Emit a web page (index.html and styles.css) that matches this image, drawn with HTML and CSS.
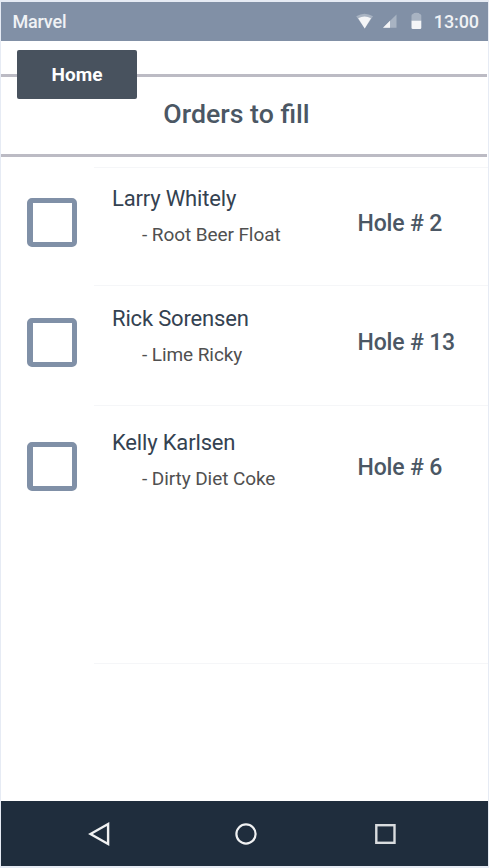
FILE: index.html
```html
<!DOCTYPE html>
<html lang="en">
<head>
<meta charset="utf-8">
<title>Orders to fill</title>
<link rel="stylesheet" href="styles.css">
</head>
<body>
<div class="screen">
  <div class="status">
    <span class="carrier">Marvel</span>
    <svg class="signals" width="67" height="20" viewBox="0 0 67 20" aria-hidden="true">
      <path d="M.2 4.2Q8.5-.8 17 4.2L8.7 16.5z" fill="#a8b3c2"/>
      <path d="M2.2 6.2Q8.6 2.8 15 6.2L8.7 16.5z" fill="#f4f5f7"/>
      <path d="M27 15.8L40.5 2.5V15.8z" fill="#a8b3c2"/>
      <path d="M27 15.8L34 8.8V15.8z" fill="#f4f5f7"/>
      <path d="M55.5 9V3.5Q55.5 2 57 2Q57.5.8 60.4.8T63.8 2Q65.3 2 65.3 3.5V9z" fill="#a8b3c2"/>
      <path d="M55.5 8.8H65.3V15.8Q65.3 17 64 17H56.8Q55.5 17 55.5 15.8z" fill="#f4f5f7"/>
    </svg>
    <span class="clock">13:00</span>
  </div>
  <header class="header">
    <a class="home">Home</a>
    <h1 class="title">Orders to fill</h1>
  </header>
  <main class="orders">
    <section class="order">
      <span class="check"></span>
      <div class="detail"><div class="name">Larry Whitely</div><div class="item">- Root Beer Float</div></div>
      <div class="hole">Hole # 2</div>
    </section>
    <section class="order second">
      <span class="check"></span>
      <div class="detail"><div class="name">Rick Sorensen</div><div class="item">- Lime Ricky</div></div>
      <div class="hole">Hole # 13</div>
    </section>
    <section class="order third">
      <span class="check"></span>
      <div class="detail"><div class="name">Kelly Karlsen</div><div class="item">- Dirty Diet Coke</div></div>
      <div class="hole">Hole # 6</div>
    </section>
    <div class="end"></div>
  </main>
  <nav class="nav">
    <svg width="24" height="26" viewBox="0 0 24 26"><path d="M3.5 13L21.1 3V23z" fill="none" stroke="#f0f1f2" stroke-width="2.4"/></svg>
    <svg width="24" height="26" viewBox="0 0 24 26"><circle cx="12" cy="13" r="9.6" fill="none" stroke="#f0f1f2" stroke-width="2.2"/></svg>
    <svg width="24" height="26" viewBox="0 0 24 26"><rect x="2.3" y="4.2" width="18.2" height="17.6" fill="none" stroke="#d9dcdf" stroke-width="2.4"/></svg>
  </nav>
</div>
</body>
</html>
```

FILE: styles.css
```css
* { box-sizing: border-box; }
body {
  margin: 0;
  height: 868px;
  padding: 2px 1px;
  background: #e6ebf4;
  font-family: Roboto, sans-serif;
  overflow: hidden;
}
.screen {
  display: flex;
  flex-direction: column;
  height: 864px;
  background: #fff;
}
.status {
  display: flex;
  align-items: center;
  height: 39px;
  padding: 0 9px 0 11.5px;
  background: #8190a6;
  color: #f0f2f5;
  font-size: 18px;
  font-weight: 500;
}
.carrier { flex: 1; letter-spacing: -0.2px; }
.signals { margin-right: 11px; }
.clock { font-size: 18px; letter-spacing: -0.1px; }
.header {
  position: relative;
  height: 83px;
  margin: 33px 1px 0 0;
  border-top: 3px solid #bcbbc4;
  border-bottom: 3px solid #bcbbc4;
}
.home {
  position: absolute;
  left: 16px;
  top: -27px;
  width: 120px;
  height: 49px;
  border-radius: 2px;
  background: #48525e;
  color: #fff;
  font-size: 19px;
  font-weight: 700;
  line-height: 50px;
  text-align: center;
}
.title {
  margin: 19px 15px 0 0;
  color: #4b5764;
  font-size: 26.7px;
  font-weight: 500;
  line-height: 36px;
  text-align: center;
}
.orders { flex: 1; padding-top: 10px; }
.order {
  display: grid;
  grid-template-columns: 85px 245.5px 1fr;
  height: 118px;
  padding: 31px 0 0 26px;
  background: linear-gradient(#f5f6f8, #f5f6f8) 93px 0 / 100% 1px no-repeat;
}
.second { height: 120px; padding-top: 33px; }
.third { height: 258px; padding-top: 37px; }
.end { height: 1px; margin-left: 93px; background: #f5f6f8; }
.check {
  width: 50px;
  height: 49px;
  border: 5px solid #8090a7;
  border-left-width: 6px;
  border-radius: 5px;
}
.detail { margin-top: -12px; }
.name {
  color: #344251;
  font-size: 22px;
  line-height: 26px;
  letter-spacing: -0.17px;
}
.item {
  margin: 11px 0 0 30px;
  color: #505050;
  font-size: 19px;
  line-height: 24px;
  letter-spacing: -0.08px;
}
.hole {
  margin-top: 12px;
  color: #4b5764;
  font-size: 23px;
  font-weight: 500;
  line-height: 28px;
  letter-spacing: -0.17px;
}
.second .hole { margin-top: 11px; }
.nav {
  display: flex;
  justify-content: space-between;
  height: 65px;
  padding: 20px 90px 0 86px;
  background: #1f2d3d;
}
.nav svg:nth-child(2) { margin-left: 7px; }
```
